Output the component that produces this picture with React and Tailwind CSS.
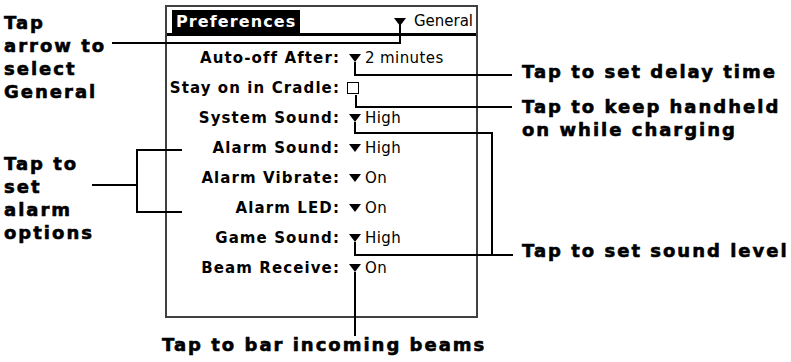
import React from 'react';

const callout = "absolute font-['DejaVu_Sans',sans-serif] font-bold text-[18px] leading-[23px] tracking-[2px] text-black whitespace-nowrap [-webkit-text-stroke:0.6px_#000]";
const palmBold = "font-['DejaVu_Sans',sans-serif] font-bold text-[15px] tracking-[1.1px]";
const palmPlain = "font-['DejaVu_Sans',sans-serif] text-[15px] tracking-[0.4px]";

function Arrow() {
  return (
    <svg width="12" height="8" viewBox="0 0 12 8" className="shrink-0">
      <polygon points="0,0 12,0 6,8" fill="#000" />
    </svg>
  );
}

function Row({ label, value, checkbox }) {
  return (
    <div className="flex h-[30px] items-center">
      <div className={`w-[173px] text-right ${palmBold}`}>{label}</div>
      {checkbox ? (
        <div className="ml-[7px] h-[12px] w-[12px] border-[1.5px] border-black" />
      ) : (
        <>
          <div className="ml-[9px]"><Arrow /></div>
          <span className={`ml-[4px] ${palmPlain}`}>{value}</span>
        </>
      )}
    </div>
  );
}

const rows = [
  { label: 'Auto-off After:', value: '2 minutes' },
  { label: 'Stay on in Cradle:', checkbox: true },
  { label: 'System Sound:', value: 'High' },
  { label: 'Alarm Sound:', value: 'High' },
  { label: 'Alarm Vibrate:', value: 'On' },
  { label: 'Alarm LED:', value: 'On' },
  { label: 'Game Sound:', value: 'High' },
  { label: 'Beam Receive:', value: 'On' },
];

// leader lines of the annotated figure: [left, top, width, height]
const lines = [
  [112, 42, 289, 2], [399, 25, 2, 19],
  [354, 62, 2, 14], [354, 74, 158, 2],
  [355, 95, 2, 13], [355, 106, 157, 2],
  [354, 122, 2, 12], [354, 132, 139, 2], [491, 132, 2, 124], [354, 254, 159, 2], [354, 242, 2, 14],
  [354, 272, 2, 64],
  [92, 184, 46, 2], [136, 149, 2, 64], [136, 149, 46, 2], [136, 211, 46, 2],
];

export default function App() {
  return (
    <div className="relative h-[362px] w-[791px] overflow-hidden bg-white pt-[5px]">
      {/* Preferences screen */}
      <div className="ml-[165px] flex h-[313px] w-[313px] flex-col border-2 border-[#404040]">
        <div className="flex h-[26px] items-end">
          <div className={`ml-[5px] flex h-[23px] w-[128px] items-center bg-black pl-[4px] text-white ${palmBold} text-[16px]`}>
            Preferences
          </div>
          <div className="flex h-[23px] flex-1 items-center justify-end pr-[3px]">
            <Arrow />
            <span className={`ml-[8px] ${palmPlain} tracking-normal`}>General</span>
          </div>
        </div>
        <div className="h-[3px] bg-black" />
        <div className="pt-[7px]">
          {rows.map((r) => (
            <Row key={r.label} {...r} />
          ))}
        </div>
      </div>

      {lines.map(([l, t, w, h], i) => (
        <div key={i} className="absolute bg-black" style={{ left: l, top: t, width: w, height: h }} />
      ))}

      <div className={`${callout} left-[4px] top-[11px]`}>
        Tap<br />arrow to<br />select<br />General
      </div>
      <div className={`${callout} left-[4px] top-[152px]`}>
        Tap to<br />set<br />alarm<br />options
      </div>
      <div className={`${callout} left-[522px] top-[60px]`}>Tap to set delay time</div>
      <div className={`${callout} left-[522px] top-[95px]`}>
        Tap to keep handheld<br />on while charging
      </div>
      <div className={`${callout} left-[522px] top-[239px]`}>Tap to set sound level</div>
      <div className={`${callout} left-[162px] top-[333px]`}>Tap to bar incoming beams</div>
    </div>
  );
}
